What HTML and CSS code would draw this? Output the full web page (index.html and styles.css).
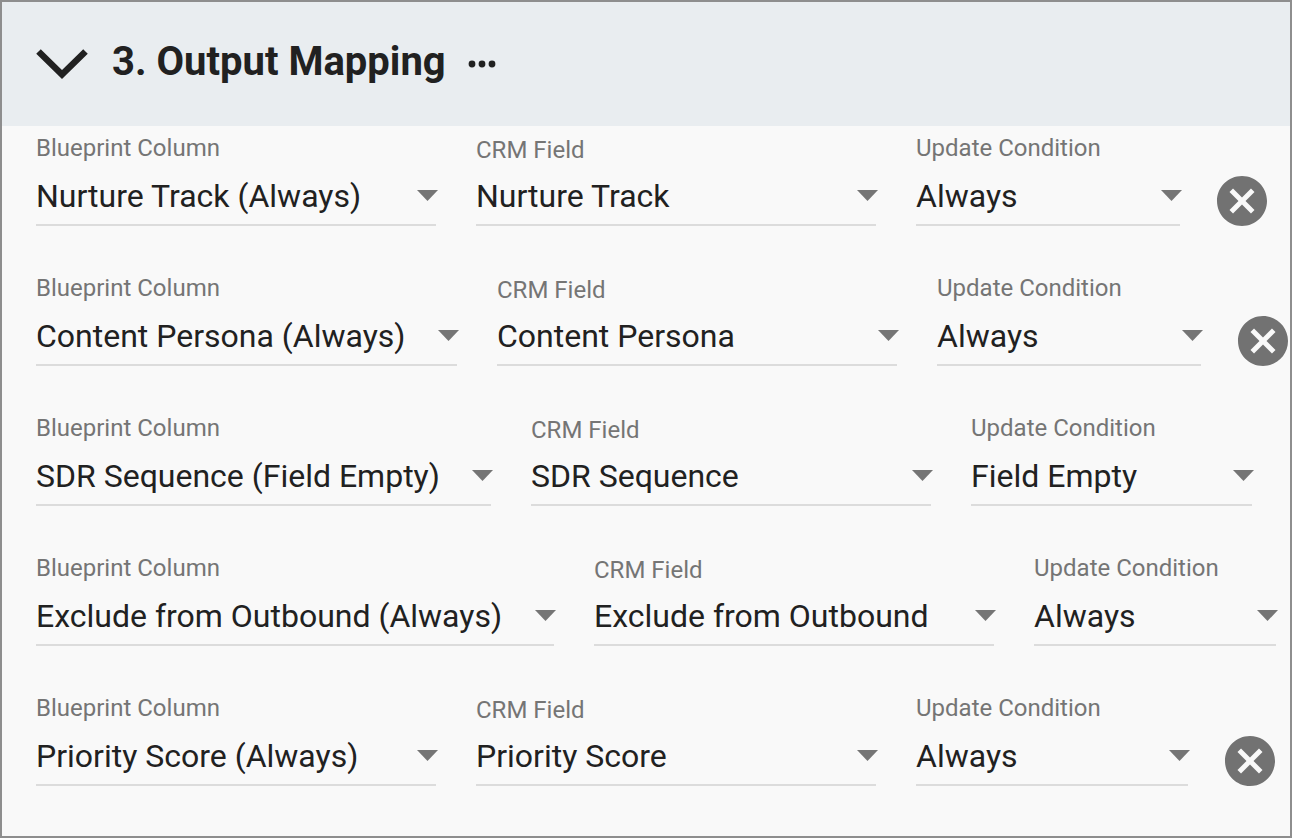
FILE: index.html
```html
<!DOCTYPE html>
<html lang="en">
<head>
<meta charset="utf-8">
<title>Output Mapping</title>
<link rel="stylesheet" href="styles.css">
</head>
<body>
<svg class="sprite" aria-hidden="true">
  <symbol id="arrow" viewBox="0 0 21 11"><path d="M0 0h21L10.5 11z"/></symbol>
  <symbol id="cancel" viewBox="0 0 24 24"><path d="M12 2C6.47 2 2 6.47 2 12s4.47 10 10 10 10-4.47 10-10S17.53 2 12 2zm5 13.59L15.59 17 12 13.41 8.41 17 7 15.59 10.59 12 7 8.41 8.41 7 12 10.59 15.59 7 17 8.41 13.41 12 17 15.59z"/></symbol>
</svg>
<main class="panel">
  <header class="panel-header">
    <button class="toggle" type="button" aria-label="Collapse section">
      <svg width="52" height="32" viewBox="0 0 52 32"><path d="M2.5 3.5L26 26.500L49.500 3.500" fill="none" stroke="currentColor" stroke-width="6.500"/></svg>
    </button>
    <h1 class="title">3. Output Mapping</h1>
    <button class="more" type="button" aria-label="More options">
      <svg width="28" height="8" viewBox="0 0 28 8"><circle cx="4" cy="4" r="3.4"/><circle cx="14" cy="4" r="3.4"/><circle cx="24" cy="4" r="3.4"/></svg>
    </button>
  </header>
  <div class="rows">
    <div class="row">
      <div class="field"><label class="label" for="b1">Blueprint Column</label><div class="control"><select class="select" id="b1"><option>Nurture Track (Always)</option></select><svg class="arrow"><use href="#arrow"/></svg></div></div>
      <div class="field"><label class="label label-crm" for="c1">CRM Field</label><div class="control"><select class="select" id="c1"><option>Nurture Track</option></select><svg class="arrow"><use href="#arrow"/></svg></div></div>
      <div class="field"><label class="label" for="u1">Update Condition</label><div class="control"><select class="select condition" id="u1"><option>Always</option></select><svg class="arrow"><use href="#arrow"/></svg></div></div>
      <button class="remove" type="button" aria-label="Remove mapping"><svg width="60" height="60"><use href="#cancel"/></svg></button>
    </div>
    <div class="row">
      <div class="field"><label class="label" for="b2">Blueprint Column</label><div class="control"><select class="select" id="b2"><option>Content Persona (Always)</option></select><svg class="arrow"><use href="#arrow"/></svg></div></div>
      <div class="field"><label class="label label-crm" for="c2">CRM Field</label><div class="control"><select class="select" id="c2"><option>Content Persona</option></select><svg class="arrow"><use href="#arrow"/></svg></div></div>
      <div class="field"><label class="label" for="u2">Update Condition</label><div class="control"><select class="select condition" id="u2"><option>Always</option></select><svg class="arrow"><use href="#arrow"/></svg></div></div>
      <button class="remove" type="button" aria-label="Remove mapping"><svg width="60" height="60"><use href="#cancel"/></svg></button>
    </div>
    <div class="row">
      <div class="field"><label class="label" for="b3">Blueprint Column</label><div class="control"><select class="select" id="b3"><option>SDR Sequence (Field Empty)</option></select><svg class="arrow"><use href="#arrow"/></svg></div></div>
      <div class="field"><label class="label label-crm" for="c3">CRM Field</label><div class="control"><select class="select" id="c3"><option>SDR Sequence</option></select><svg class="arrow"><use href="#arrow"/></svg></div></div>
      <div class="field"><label class="label" for="u3">Update Condition</label><div class="control"><select class="select condition condition-wide" id="u3"><option>Field Empty</option></select><svg class="arrow"><use href="#arrow"/></svg></div></div>
    </div>
    <div class="row">
      <div class="field"><label class="label" for="b4">Blueprint Column</label><div class="control"><select class="select" id="b4"><option>Exclude from Outbound (Always)</option></select><svg class="arrow"><use href="#arrow"/></svg></div></div>
      <div class="field"><label class="label label-crm" for="c4">CRM Field</label><div class="control"><select class="select" id="c4"><option>Exclude from Outbound</option></select><svg class="arrow"><use href="#arrow"/></svg></div></div>
      <div class="field"><label class="label" for="u4">Update Condition</label><div class="control"><select class="select condition condition-narrow" id="u4"><option>Always</option></select><svg class="arrow"><use href="#arrow"/></svg></div></div>
    </div>
    <div class="row">
      <div class="field"><label class="label" for="b5">Blueprint Column</label><div class="control"><select class="select" id="b5"><option>Priority Score (Always)</option></select><svg class="arrow"><use href="#arrow"/></svg></div></div>
      <div class="field"><label class="label label-crm" for="c5">CRM Field</label><div class="control"><select class="select" id="c5"><option>Priority Score</option></select><svg class="arrow"><use href="#arrow"/></svg></div></div>
      <div class="field"><label class="label" for="u5">Update Condition</label><div class="control"><select class="select condition condition-medium" id="u5"><option>Always</option></select><svg class="arrow"><use href="#arrow"/></svg></div></div>
      <button class="remove" type="button" aria-label="Remove mapping"><svg width="60" height="60"><use href="#cancel"/></svg></button>
    </div>
  </div>
</main>
</body>
</html>
```
FILE: styles.css
```css
* { box-sizing: border-box; }
body {
  margin: 0;
  font-family: Roboto, "Liberation Sans", sans-serif;
  color: #212121;
  background: #f9f9f9;
}
button {
  padding: 0;
  border: 0;
  background: none;
  color: inherit;
  cursor: pointer;
}
svg { display: block; fill: currentColor; }
.sprite { position: absolute; width: 0; height: 0; }
.panel {
  min-height: 100vh;
  border: 2px solid #8e8e8e;
  overflow: hidden;
}
.panel-header {
  display: flex;
  align-items: center;
  min-height: 124px;
  padding: 0 34px 4px;
  background: #e9edf0;
}
.title {
  margin: 0 22px 0 24px;
  font-size: 40px;
  line-height: 48px;
  font-weight: 700;
}
.more { padding-top: 4px; }
.toggle { padding-top: 4px; }
.rows { padding: 8px 0 0 34px; }
.row {
  display: flex;
  align-items: flex-start;
  gap: 40px;
  min-height: 140px;
}
.field { flex: none; }
.label {
  display: block;
  height: 42px;
  font-size: 24px;
  line-height: 28px;
  color: #757575;
}
.label-crm { line-height: 32px; }
.control {
  display: grid;
  align-items: center;
}
.select {
  grid-area: 1 / 1;
  appearance: none;
  min-width: 400px;
  margin: 0;
  padding: 0 51px 8px 0;
  border: 0;
  border-bottom: 2px solid #dcdcdc;
  border-radius: 0;
  background: none;
  color: inherit;
  font-family: inherit;
  font-size: 32px;
  line-height: 40px;
}
.condition { min-width: 264px; }
.condition-wide { min-width: 281px; padding-right: 40px; }
.condition-narrow { min-width: 242px; }
.condition-medium { min-width: 272px; }
.arrow {
  grid-area: 1 / 1;
  justify-self: end;
  width: 21px;
  height: 11px;
  margin: 0 -2px 11px 0;
  color: #757575;
  pointer-events: none;
}
.remove {
  flex: none;
  margin: 37px 0 0 -8px;
  color: #727272;
}
```
